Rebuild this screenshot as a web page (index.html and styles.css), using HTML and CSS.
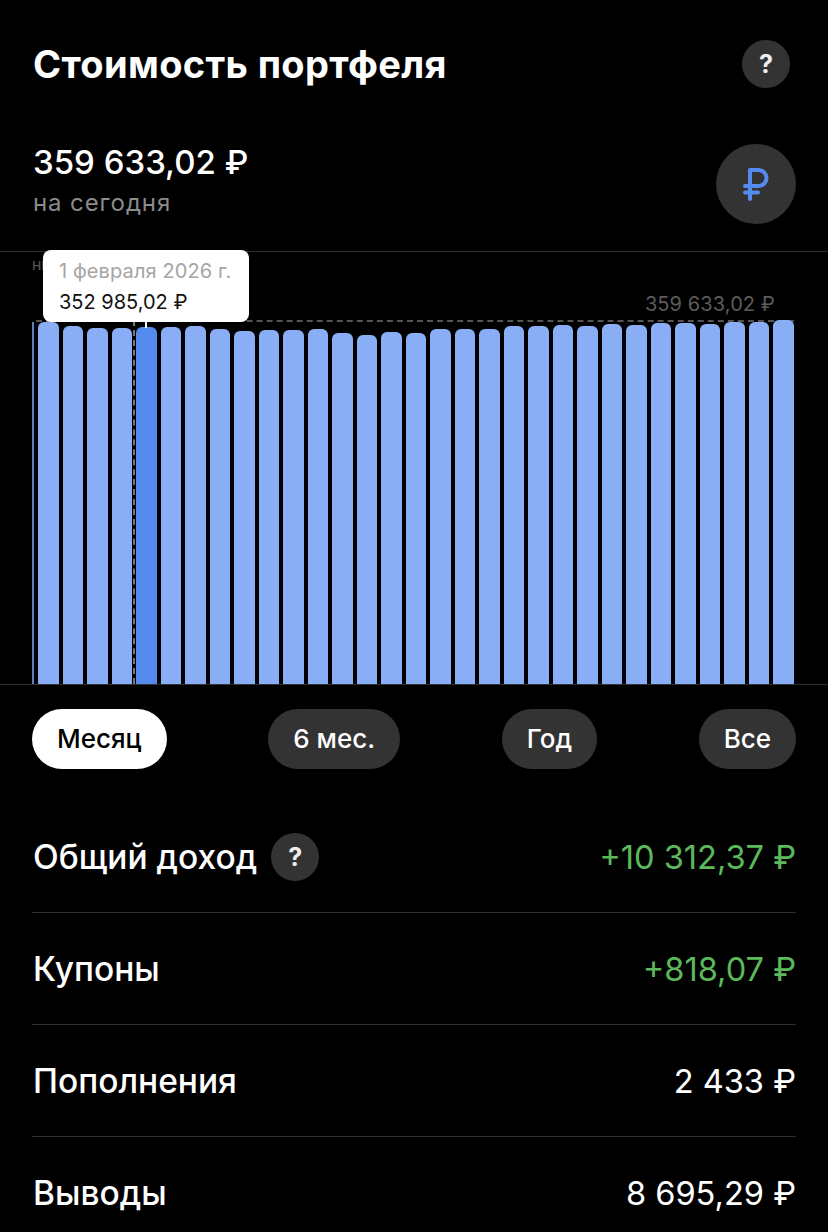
FILE: index.html
```html
<!DOCTYPE html>
<html>
  <head>
    <meta charset="utf-8" />
    <title>Стоимость портфеля</title>

    <link rel="stylesheet" href="styles.css">
  </head>

  <body>
    <div class="screen">
      <div class="top">
        <h1>Стоимость портфеля</h1>
        <div class="hint hint-big">?</div>
      </div>

      <div class="summary">
        <div>
          <div class="amount">359 633,02 ₽</div>
          <div class="today">на сегодня</div>
        </div>
        <div class="currency">
          <svg width="26" height="34" viewBox="0 0 26 34">
            <path d="M7 32V3H15.500a8 8 0 0 1 0 16H2M2 25.500H15" fill="none" stroke="#558aef" stroke-width="4" stroke-linecap="round" stroke-linejoin="round" />
          </svg>
        </div>
      </div>

      <div class="chart">
        <div class="edge-label">нв</div>
        <div class="max-label">359 633,02 ₽</div>
        <div class="max-line"></div>
        <div class="cursor"></div>
        <div class="sliver"></div>
        <div class="bars" id="bars"></div>
        <div class="stem"></div>
        <div class="tooltip">
          <div class="tooltip-date">1 февраля 2026 г.</div>
          <div class="tooltip-value">352 985,02 ₽</div>
        </div>
      </div>

      <div class="periods">
        <div class="period active">Месяц</div>
        <div class="period">6 мес.</div>
        <div class="period">Год</div>
        <div class="period">Все</div>
      </div>

      <div class="rows">
        <div class="row">
          <div class="row-name">Общий доход <span class="hint">?</span></div>
          <div class="row-value green">+10 312,37 ₽</div>
        </div>
        <div class="row">
          <div class="row-name">Купоны</div>
          <div class="row-value green">+818,07 ₽</div>
        </div>
        <div class="row">
          <div class="row-name">Пополнения</div>
          <div class="row-value">2 433 ₽</div>
        </div>
        <div class="row">
          <div class="row-name">Выводы</div>
          <div class="row-value">8 695,29 ₽</div>
        </div>
      </div>
    </div>
    <script>
      let tops = [322, 326, 328, 328, 327, 327, 326, 329, 331, 330, 330, 329, 333, 335, 332, 333,
        329, 329, 329, 326, 326, 325, 326, 324, 325, 323, 323, 324, 322, 322, 320];
      let bars = document.getElementById("bars");

      tops.forEach((top, i) => {
        let bar = document.createElement("div");
        bar.className = i == 4 ? "bar selected" : "bar";
        bar.style.height = 684 - top + "px";
        bars.appendChild(bar);
      });
    </script>
  </body>
</html>
```

FILE: styles.css
```css
* {
  box-sizing: border-box;
  margin: 0;
  padding: 0;
}
html,
body {
  height: 1232px;
  overflow: hidden;
  background: #000;
}
.screen {
  font-family: Inter, "Noto Sans", sans-serif;
  color: #fff;
}

.top {
  height: 130px;
  padding: 0 38px 2px 33px;
  display: flex;
  align-items: center;
  justify-content: space-between;
}
h1 {
  font-size: 38px;
  font-weight: 700;
  letter-spacing: 0.35px;
}

.hint {
  width: 48px;
  height: 48px;
  border-radius: 50%;
  background: #333;
  color: #eee;
  font-size: 25px;
  font-weight: 700;
  display: inline-flex;
  align-items: center;
  justify-content: center;
}

.summary {
  height: 122px;
  padding: 13px 32px 0 33px;
  border-bottom: 1px solid #2e2e2e;
  display: flex;
  justify-content: space-between;
}
.amount {
  font-size: 33px;
  font-weight: 500;
  line-height: 38px;
}
.today {
  margin-top: 6px;
  font-size: 24px;
  line-height: 32px;
  letter-spacing: 0.9px;
  color: #8b8b8b;
}
.currency {
  margin-top: 1px;
  width: 80px;
  height: 80px;
  border-radius: 50%;
  background: #333;
  display: flex;
  align-items: center;
  justify-content: center;
}

.chart {
  position: relative;
  height: 433px;
  border-bottom: 1px solid #2e2e2e;
  display: flex;
  align-items: flex-end;
  padding-left: 38px;
}
.bars {
  position: relative;
  display: flex;
  align-items: flex-end;
  gap: 4px;
}
.bar {
  width: 20.500px;
  background: #8aaef6;
  border-radius: 6px 6px 0 0;
}
.bar.selected {
  background: #558aef;
}
.sliver {
  position: absolute;
  left: 32px;
  top: 70px;
  bottom: 0;
  width: 2px;
  background: #5f80c0;
}
.stem {
  position: absolute;
  left: 145px;
  top: 70px;
  width: 2px;
  height: 6px;
  background: #fff;
}
.edge-label {
  position: absolute;
  left: 32px;
  top: 1px;
  font-size: 16px;
  line-height: 22px;
  letter-spacing: -0.5px;
  color: #555;
}
.max-label {
  position: absolute;
  right: 53px;
  top: 40px;
  font-size: 20px;
  line-height: 24px;
  letter-spacing: 0.1px;
  color: #5c5c5c;
}
.max-line {
  position: absolute;
  left: 36px;
  right: 34px;
  top: 68px;
  border-top: 2px dashed #555;
}
.cursor {
  position: absolute;
  left: 133px;
  top: 68px;
  bottom: 0;
  border-left: 2px dashed #777;
}
.tooltip {
  position: absolute;
  left: 43px;
  top: -2px;
  width: 206px;
  height: 72px;
  padding: 9px 16px;
  background: #fff;
  border-radius: 8px;
}
.tooltip-date {
  font-size: 20px;
  line-height: 24px;
  letter-spacing: 0.1px;
  color: #a5a5a5;
}
.tooltip-value {
  margin-top: 7px;
  font-size: 20px;
  line-height: 24px;
  color: #111;
}

.periods {
  margin-top: 24px;
  padding: 0 32px;
  display: flex;
  justify-content: space-between;
}
.period {
  height: 60px;
  padding: 0 25px;
  border-radius: 30px;
  background: #333;
  font-size: 26px;
  font-weight: 500;
  line-height: 60px;
}
.period.active {
  background: #fff;
  color: #000;
}

.rows {
  margin-top: 32px;
  padding: 0 32px;
}
.row {
  height: 112px;
  padding-top: 1px;
  border-bottom: 1px solid #2e2e2e;
  display: flex;
  align-items: center;
  justify-content: space-between;
}
.row-name {
  padding-left: 1px;
  font-size: 33.500px;
  font-weight: 500;
  display: flex;
  align-items: center;
  gap: 14px;
}
.row-value {
  font-size: 32.600px;
}
.green {
  color: #5cb85c;
}
```
